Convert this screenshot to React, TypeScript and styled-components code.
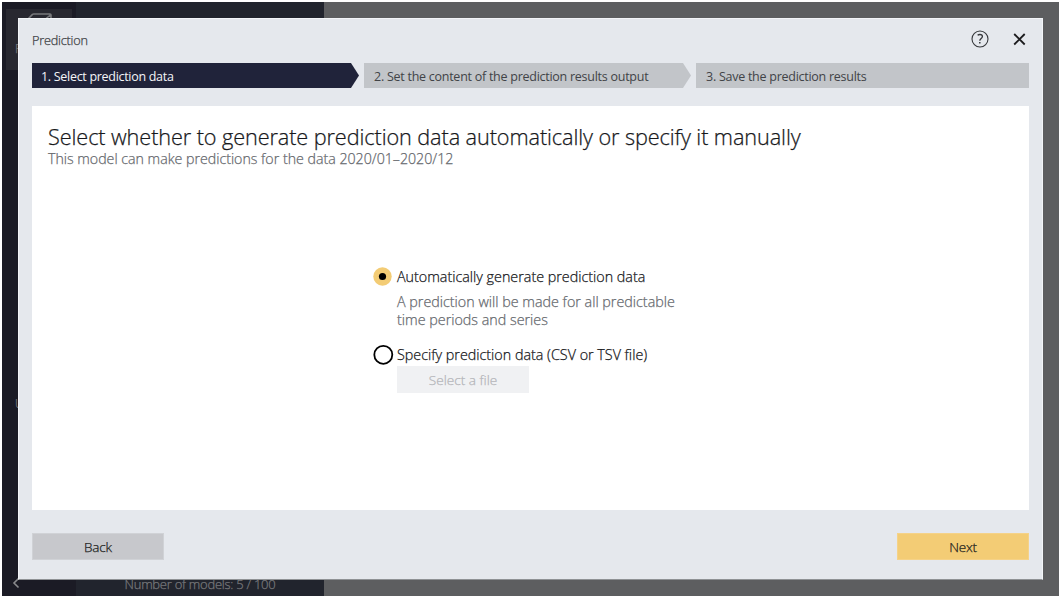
import React from "react";
import styled, { createGlobalStyle } from "styled-components";

const GlobalStyle = createGlobalStyle`
  *, *::before, *::after { box-sizing: border-box; }
  html, body { margin: 0; padding: 0; background: #fff; }
  body {
    font-family: "Open Sans", "Noto Sans", sans-serif;
    font-weight: 300;
    -webkit-text-stroke: 0.25px currentColor;
    overflow: hidden;
  }
  h1, h2, p { margin: 0; font-weight: 300; }
  button { font: inherit; border: 0; padding: 0; margin: 0; }
`;

const Screen = styled.div`
  position: relative;
  width: 1061px;
  height: 598px;
  padding: 2px;
  background: #fff;
`;

const Backdrop = styled.div`
  display: flex;
  height: 594px;
  width: 1057px;
  background: #5d5e60;
`;

const Rail = styled.nav`
  display: flex;
  flex-direction: column;
  justify-content: space-between;
  width: 74px;
  padding: 7px 4px 5px;
  background: #1b1b25;
  color: #77787b;
  font-size: 12px;
`;

const RailTile = styled.div`
  display: flex;
  flex-direction: column;
  height: 61px;
  padding: 3px 0 0 9px;
  background: #282830;
`;

const TileIcon = styled.svg`
  width: 26px;
  height: 26px;
  margin-left: 12px;
`;

const TileLabel = styled.span`
  line-height: 18px;
  margin-top: 2px;
`;

const RailLink = styled.div`
  padding-left: 9px;
  line-height: 18px;
  margin-top: 325px;
`;

const RailCollapse = styled.svg`
  width: 8px;
  height: 12px;
  margin-left: 6px;
  margin-bottom: 2px;
`;

const ModelPanel = styled.aside`
  display: flex;
  align-items: flex-end;
  justify-content: center;
  width: 248px;
  padding-bottom: 3px;
  background: #21242d;
  color: #77787b;
  font-size: 13px;
  letter-spacing: -0.25px;
  line-height: 18px;
`;

const Dialog = styled.section`
  position: absolute;
  left: 18px;
  top: 18px;
  width: 1025px;
  height: 562px;
  padding: 0 13px;
  display: flex;
  flex-direction: column;
  background: #e5e8ed;
  border: 1px solid #f3f5f8;
  border-bottom-color: #8f9295;
`;

const DialogHeader = styled.header`
  display: flex;
  align-items: center;
  justify-content: space-between;
  height: 44px;
`;

const DialogTitle = styled.h1`
  font-size: 12.7px;
  line-height: 18px;
  padding-bottom: 2px;
  color: #3c3f44;
  letter-spacing: -0.2px;
`;

const HeaderActions = styled.div`
  display: flex;
  align-items: center;
  gap: 24px;
  padding: 0 2px 4px 0;
`;

const IconButton = styled.button<{ $size: number }>`
  display: flex;
  width: ${(p) => p.$size}px;
  height: ${(p) => p.$size}px;
  background: none;
  color: #1c1c1e;

  svg { width: 100%; height: 100%; }
`;

const Steps = styled.ol`
  display: flex;
  gap: 5px;
  height: 25px;
  margin: 0;
  padding: 0;
  list-style: none;
`;

const Step = styled.li<{ $active?: boolean; $last?: boolean; $spacing: number }>`
  width: ${(p) => (p.$last ? 333 : 327)}px;
  padding: 1px 0 0 ${(p) => (p.$active ? 9 : 10)}px;
  font-size: 12.5px;
  line-height: 25px;
  font-weight: 400;
  -webkit-text-stroke: 0;
  letter-spacing: ${(p) => p.$spacing}px;
  white-space: nowrap;
  color: ${(p) => (p.$active ? "#f4f5f8" : "#414347")};
  background: ${(p) => (p.$active ? "#20233a" : "#c2c5c9")};
  clip-path: ${(p) =>
    p.$last ? "none" : "polygon(0 0, calc(100% - 8px) 0, 100% 50%, calc(100% - 8px) 100%, 0 100%)"};
`;

const Content = styled.main`
  display: flex;
  flex-direction: column;
  height: 404px;
  margin-top: 18px;
  padding: 17px 16px 0;
  background: #fff;
`;

const Heading = styled.h2`
  font-size: 21.7px;
  line-height: 28px;
  letter-spacing: -0.1px;
  color: #17181b;
  white-space: nowrap;
`;

const SubHeading = styled.p`
  font-size: 14.2px;
  line-height: 18px;
  margin-top: -1px;
  color: #66696e;
  white-space: nowrap;
`;

const Options = styled.div`
  display: flex;
  flex-direction: column;
  margin: 97px 0 0 325px;
`;

const Option = styled.label`
  display: flex;
  align-items: center;
  height: 22px;
  gap: 3px;
  font-size: 14.32px;
  color: #17181b;
  white-space: nowrap;
`;

const Radio = styled.svg`
  width: 21px;
  height: 21px;
  flex: none;
`;

const OptionHint = styled.p`
  margin: 6px 0 14px 24px;
  font-size: 14.32px;
  line-height: 18px;
  color: #66696e;
`;

const FileButton = styled.button`
  width: 132px;
  height: 27px;
  margin: 1px 0 0 24px;
  padding-top: 1px;
  background: #f0f1f3;
  color: #b4b5b9;
  font-size: 13.6px;
  line-height: 26px;
`;

const Footer = styled.footer`
  display: flex;
  justify-content: space-between;
  padding-top: 23px;
`;

const ActionButton = styled.button<{ $primary?: boolean }>`
  width: 132px;
  height: 27px;
  padding-top: 1px;
  border: 1px solid ${(p) => (p.$primary ? "#f5d288" : "#d0d2d6")};
  background: ${(p) => (p.$primary ? "#f3cc75" : "#c7c8cc")};
  color: #1c1d20;
  font-size: 13.5px;
  letter-spacing: -0.2px;
  line-height: 24px;
`;

export default function App() {
  return (
    <Screen>
      <GlobalStyle />
      <Backdrop>
        <Rail>
          <div>
            <RailTile>
              <TileIcon viewBox="0 0 26 26" fill="none" stroke="#77787b" strokeWidth="1.6">
                <path d="M1 7 5.500 2.400Q6 2 6.600 2H23q1 0 1 1v13l-6 7H1ZM1 7h17.500L24 2.500M18.500 7v16" strokeLinejoin="round" />
              </TileIcon>
              <TileLabel>P</TileLabel>
            </RailTile>
            <RailLink>U</RailLink>
          </div>
          <RailCollapse viewBox="0 0 8 12" fill="none" stroke="#8a8b8e" strokeWidth="1.6">
            <path d="M6.500 1.500 2 6l4.500 4.500" />
          </RailCollapse>
        </Rail>
        <ModelPanel>Number of models: 5 / 100</ModelPanel>
      </Backdrop>

      <Dialog role="dialog" aria-label="Prediction">
        <DialogHeader>
          <DialogTitle>Prediction</DialogTitle>
          <HeaderActions>
            <IconButton $size={18} aria-label="Help">
              <svg viewBox="0 0 18 18" fill="none" stroke="#35373b">
                <circle cx="9" cy="9" r="8" strokeWidth="1.1" />
                <path d="M6.600 5.300c.6-.5 1.400-.8 2.300-.8 1.500 0 2.500.8 2.500 2 0 1.900-2.600 2-2.600 4.200" strokeWidth="1.300" />
                <path d="M8.800 12.100v1.500" strokeWidth="1.500" />
              </svg>
            </IconButton>
            <IconButton $size={14} aria-label="Close">
              <svg viewBox="0 0 14 14" fill="none" stroke="currentColor" strokeWidth="1.800">
                <path d="M1.200 2l10.500 10.500M11.700 2 1.200 12.500" />
              </svg>
            </IconButton>
          </HeaderActions>
        </DialogHeader>

        <Steps>
          <Step $active $spacing={-0.3}>1. Select prediction data</Step>
          <Step $spacing={-0.26}>2. Set the content of the prediction results output</Step>
          <Step $last $spacing={-0.26}>3. Save the prediction results</Step>
        </Steps>

        <Content>
          <Heading>Select whether to generate prediction data automatically or specify it manually</Heading>
          <SubHeading>This model can make predictions for the data 2020/01–2020/12</SubHeading>
          <Options>
            <Option>
              <Radio viewBox="0 0 21 21">
                <circle cx="9.500" cy="10.500" r="9.200" fill="#f3cc75" />
                <circle cx="9.500" cy="10.500" r="3.600" fill="#000" />
              </Radio>
              <span>Automatically generate prediction data</span>
            </Option>
            <OptionHint>
              A prediction will be made for all predictable
              <br />
              time periods and series
            </OptionHint>
            <Option>
              <Radio viewBox="0 0 21 21">
                <circle cx="10.300" cy="10.800" r="9" fill="#fff" stroke="#000" strokeWidth="1.800" />
              </Radio>
              <span>Specify prediction data (CSV or TSV file)</span>
            </Option>
            <FileButton disabled>Select a file</FileButton>
          </Options>
        </Content>

        <Footer>
          <ActionButton>Back</ActionButton>
          <ActionButton $primary>Next</ActionButton>
        </Footer>
      </Dialog>
    </Screen>
  );
}
